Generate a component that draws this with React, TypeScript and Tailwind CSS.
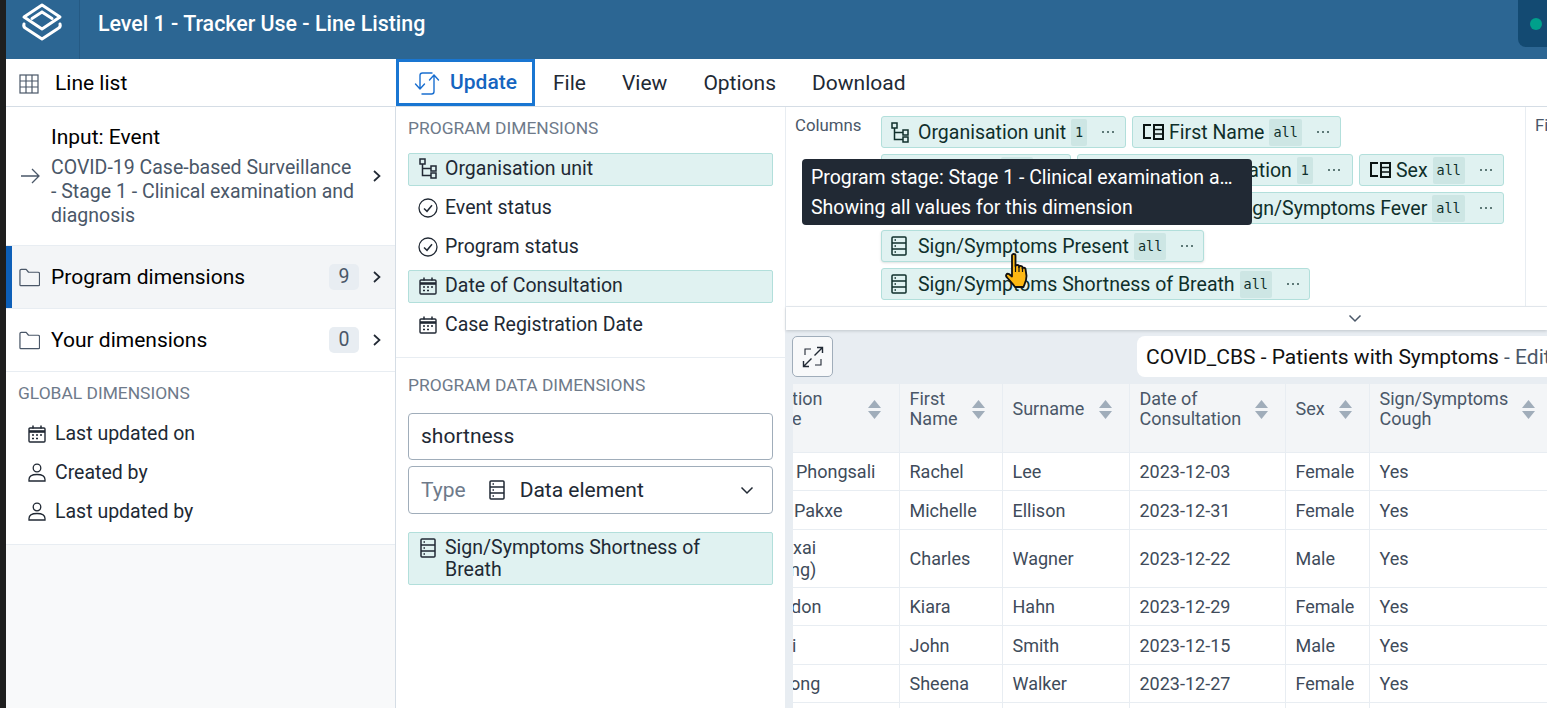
import React from "react";

const S = "[font-family:Roboto,sans-serif]";

function Logo() {
  return (
    <svg width="42" height="38" viewBox="0 0 42 38" fill="none" stroke="#fff" strokeWidth="3" strokeLinejoin="round" strokeLinecap="round">
      <path d="M21 2 L39 14 L21 26 L3 14 Z" />
      <path d="M21 9 L31 15.5 M21 9 L11 15.5" />
      <path d="M3 21 Q2 24 5 25.5 L21 36 L37 25.5 Q40 24 39 21" />
    </svg>
  );
}
function Grid() {
  return (
    <svg width="20" height="20" viewBox="0 0 20 20" fill="none" stroke="#4a5768" strokeWidth="1.2">
      <rect x="1" y="1" width="18" height="18" />
      <path d="M7 1v18M13 1v18M1 7h18M1 13h18" />
    </svg>
  );
}
function UpdateIcon() {
  return (
    <svg width="26" height="24" viewBox="0 0 26 24" fill="none" stroke="#1a6fd0" strokeWidth="1.4" strokeLinecap="round" strokeLinejoin="round">
      <path d="M1.500 13l4.500 5 4.500-5M6 18V4.500C6 3 7 2 8.500 2H18" />
      <path d="M15.500 9l4.500-5 4.500 5M20 4v16.500c0 1.500-1 2.500-2.500 2.500H8" />
    </svg>
  );
}
function Arrow() {
  return (
    <svg width="20" height="16" viewBox="0 0 20 16" fill="none" stroke="#4a5768" strokeWidth="1.300">
      <path d="M1 8h18M12 1l7 7-7 7" />
    </svg>
  );
}
function Chevron() {
  return (
    <svg width="10" height="14" viewBox="0 0 10 14" fill="none" stroke="#212934" strokeWidth="1.700" className="shrink-0">
      <path d="M2 2l5.500 5L2 12" />
    </svg>
  );
}
function ChevronDown({ color = "#212934" }: { color?: string }) {
  return (
    <svg width="14" height="9" viewBox="0 0 14 9" fill="none" stroke={color} strokeWidth="1.500">
      <path d="M1.500 1.500L7 7l5.500-5.500" />
    </svg>
  );
}
function Folder() {
  return (
    <svg width="21" height="19" viewBox="0 0 22 19" fill="none" stroke="#4a5768" strokeWidth="1.300" strokeLinejoin="round">
      <path d="M1 2.500C1 1.500 1.500 1 2.500 1h5l2.500 3h10c1 0 1.500 .5 1.500 1.500V17c0 .6-.5 1-1 1H2c-.6 0-1-.4-1-1z" />
    </svg>
  );
}
function Calendar() {
  return (
    <svg width="18" height="18" viewBox="0 0 18 18" fill="none" className="shrink-0">
      <rect x="1" y="3" width="16" height="14" rx="1" stroke="#212934" strokeWidth="1.400" />
      <path d="M1 6.500h16" stroke="#212934" strokeWidth="2.600" />
      <path d="M5 .5v3M13 .5v3" stroke="#212934" strokeWidth="1.500" />
      <path d="M4 10h2M8 10h2M12 10h2M4 13.500h2M8 13.500h2" stroke="#212934" strokeWidth="1.700" />
    </svg>
  );
}
function Person() {
  return (
    <svg width="18" height="19" viewBox="0 0 18 19" fill="none" stroke="#212934" strokeWidth="1.300" className="shrink-0">
      <circle cx="9" cy="5" r="3.800" />
      <path d="M1 18v-1.500C1 13.500 4 11.500 9 11.500s8 2 8 5V18z" />
    </svg>
  );
}
function Check() {
  return (
    <svg width="20" height="20" viewBox="0 0 20 20" fill="none" stroke="#212934" strokeWidth="1.300" className="shrink-0">
      <circle cx="10" cy="10" r="9" />
      <path d="M6 10.500l3 2.800 5-6" strokeWidth="1.500" />
    </svg>
  );
}
function OrgUnit({ color = "#212934" }: { color?: string }) {
  return (
    <svg width="18" height="21" viewBox="0 0 18 21" fill="none" stroke={color} strokeWidth="1.500" className="shrink-0">
      <rect x="1" y="1" width="5" height="5" />
      <rect x="12" y="8" width="5" height="5" />
      <rect x="12" y="15" width="5" height="5" />
      <path d="M3.500 6v11.500H12M3.500 10.500H12" />
    </svg>
  );
}
function DataEl({ color = "#212934" }: { color?: string }) {
  return (
    <svg width="16" height="20" viewBox="0 0 16 20" fill="none" stroke={color} strokeWidth="1.500" className="shrink-0">
      <rect x="1" y="1" width="14" height="18" rx="1" />
      <path d="M1 7h14M1 13h14" />
      <path d="M3.500 4h1.500M3.500 10h1.500M3.500 16h1.500" strokeWidth="1.300" />
    </svg>
  );
}
function Attr({ color = "#0a1413" }: { color?: string }) {
  return (
    <svg width="22" height="18" viewBox="0 0 22 18" fill="none" stroke={color} strokeWidth="2" className="shrink-0">
      <path d="M9 2H2v13h7" />
      <rect x="12" y="2" width="9" height="14" />
      <path d="M12 6.500h9M12 11h9" strokeWidth="1.700" />
    </svg>
  );
}
function Expand() {
  return (
    <svg width="22" height="22" viewBox="0 0 22 22" fill="none" stroke="#212934" strokeWidth="1.400">
      <path d="M9 3H3v6M19 13v6h-6" strokeWidth="1.100" />
      <path d="M12.500 9.500L20.500 1.500M15 1.500h5.500V7M9.500 12.500L1.500 20.500M1.500 15v5.500H7" />
    </svg>
  );
}
function Sort() {
  return (
    <svg width="13" height="19" viewBox="0 0 13 19" fill="#a0adba" className="shrink-0">
      <path d="M6.500 0L13 8H0zM6.500 19L0 11h13z" />
    </svg>
  );
}
function Dots() {
  return (
    <svg width="14" height="4" viewBox="0 0 14 4" fill="#33524f">
      <circle cx="2" cy="2" r="1" />
      <circle cx="7" cy="2" r="1" />
      <circle cx="12" cy="2" r="1" />
    </svg>
  );
}
function Hand() {
  return (
    <svg width="27" height="36" viewBox="0 0 27 36">
      <path
        d="M8 2.500c0-2 3.500-2 3.500 0V13c0-1.500 3.500-1.500 3.500 0v1c0-1.500 3.500-1.500 3.500 .5v1c0-1.500 3-1 3 .5l1 7c0 5-2 8-3 11H11C9 31 6 28 3 24.500c-2-2-.5-4.500 2-3.500l3 2.500z"
        fill="#fdb813"
        stroke="#111"
        strokeWidth="1.800"
        strokeLinejoin="round"
      />
      <path d="M11.500 13v6M15 14v5M18.500 15v4" stroke="#111" strokeWidth="1.200" />
    </svg>
  );
}

function Chip({ icon, label, tag, className = "" }: { icon: React.ReactNode; label: string; tag: string; className?: string }) {
  return (
    <div className={`flex h-8 items-center rounded-[3px] border border-[#b2dfdb] bg-[#e0f2f1] pl-[9px] text-[#0f2f2b] ${className}`}>
      <span className="flex w-[22px] shrink-0 justify-start">{icon}</span>
      <span className="ml-[5px] whitespace-nowrap pt-[2px] text-[19.500px] leading-5">{label}</span>
      <span className="ml-[5px] flex h-[27px] items-center justify-center rounded-[2px] bg-[#cde6e4] px-[4px] pt-[1px] [font-family:'DejaVu_Sans_Mono',monospace] text-[13.500px]">
        {tag}
      </span>
      <span className="flex flex-1 justify-center pl-[4px]"><Dots /></span>
    </div>
  );
}

function DimItem({ icon, label, active }: { icon: React.ReactNode; label: string; active?: boolean }) {
  return (
    <div className={`flex h-[33px] items-center gap-[7px] rounded-[2px] border pb-[2px] pl-[9px] text-[#212934] ${active ? "border-[#b2dfdb] bg-[#e0f2f1]" : "border-transparent"}`}>
      <span className="flex w-[20px] justify-center">{icon}</span>
      {label}
    </div>
  );
}

const cols = ["w-[106px]", "w-[103px]", "w-[127px]", "w-[156px]", "w-[84px]", "w-[178px]"];

function Th({ children, i }: { children: React.ReactNode; i: number }) {
  return (
    <th className={`${cols[i]} border-r border-b border-[#e8edf2] bg-[#f3f5f7] pl-[10px] ${i === 5 ? "pr-[12px]" : "pr-[17px]"} pt-[5px] pb-[22px] text-left align-top font-normal`}>
      <div className="flex min-h-[40px] items-center justify-between gap-1 leading-5 text-[#4a5768]">
        <span>{children}</span>
        <Sort />
      </div>
    </th>
  );
}
function Td({ children, cls = "" }: { children?: React.ReactNode; cls?: string }) {
  return <td className={`border-r border-b border-[#e8edf2] px-[10px] pt-[2px] leading-[22px] text-[#404b5a] ${cls}`}>{children}</td>;
}

const rows: [React.ReactNode, string, string, string, string, string, string][] = [
  [<span className="ml-[-7px]">Phongsali</span>, "Rachel", "Lee", "2023-12-03", "Female", "Yes", "h-[38px]"],
  [<span className="ml-[-9px]">Pakxe</span>, "Michelle", "Ellison", "2023-12-31", "Female", "Yes", "h-[39px]"],
  [<span className="ml-[-10px] block">xai<br /><span className="ml-[-3px]">ng)</span></span>, "Charles", "Wagner", "2023-12-22", "Male", "Yes", "h-[58px]"],
  [<span className="ml-[-12px]">don</span>, "Kiara", "Hahn", "2023-12-29", "Female", "Yes", "h-[38px]"],
  [<span className="ml-[-11px]">i</span>, "John", "Smith", "2023-12-15", "Male", "Yes", "h-[39px]"],
  [<span className="ml-[-13px]">ong</span>, "Sheena", "Walker", "2023-12-27", "Female", "Yes", "h-[38px]"],
  ["", "", "", "", "", "", "h-[38px]"],
];

export default function App() {
  return (
    <div className={`flex h-[708px] w-[1547px] overflow-hidden bg-white ${S} text-[19.500px] text-[#212934]`}>
      <div className="w-[6px] shrink-0 bg-[#1e1e1e]" />
      <div className="flex min-w-0 flex-1 flex-col">
        {/* top bar */}
        <header className="flex h-[59px] shrink-0 items-start bg-[#2c6693] text-white">
          <div className="flex h-full w-[74px] shrink-0 items-start justify-center border-r border-[#255a84] pt-[3px] pr-[1px]">
            <Logo />
          </div>
          <div className="ml-[18px] mt-[12px] text-[21.400px] leading-6 font-medium">Level 1 - Tracker Use - Line Listing</div>
          <div className="ml-auto flex h-[47px] w-[29px] items-center rounded-bl-lg bg-[#134a72] pl-[12px]">
            <span className="h-3 w-3 rounded-full bg-[#00a08b]" />
          </div>
        </header>

        {/* toolbar */}
        <div className="flex h-[48px] shrink-0 border-b border-[#d5dde5] text-[21px]">
          <div className="flex w-[390px] shrink-0 items-center gap-[16px] pl-[13px] pt-[2px] text-black">
            <Grid />
            <span>Line list</span>
          </div>
          <div className="flex w-[139px] shrink-0 items-center gap-[10px] border-[3px] border-[#1976d2] pl-[15px] font-medium text-[#1565c0]">
            <UpdateIcon />
            Update
          </div>
          <nav className="ml-[18px] flex items-center gap-[36px] pt-[2px] text-[#212934]">
            <span>File</span>
            <span>View</span>
            <span>Options</span>
            <span>Download</span>
          </nav>
        </div>

        <div className="flex min-h-0 flex-1">
          {/* left */}
          <aside className="flex w-[390px] shrink-0 flex-col border-r border-[#d5dde5] bg-[#f8f9fa]">
            <div className="flex h-[139px] items-center border-b border-[#e8edf2] bg-white pl-[14px]">
              <Arrow />
              <div className="ml-[11px] w-[308px] shrink-0 pt-[1px]">
                <div className="mb-[7px] text-[21px] leading-6 text-[#000]">Input: Event</div>
                <div className="leading-6 text-[#4a5768]">COVID-19 Case-based Surveillance - Stage 1 - Clinical examination and diagnosis</div>
              </div>
              <span className="ml-[13px]"><Chevron /></span>
            </div>
            <div className="flex h-[63px] items-center border-b border-[#e8edf2] bg-[#f3f5f7] text-[21px]">
              <span className="h-full w-[6px] bg-[#0d5fb8]" />
              <span className="ml-[7px]"><Folder /></span>
              <span className="ml-[11px] flex-1 pt-[2px] text-[#000]">Program dimensions</span>
              <span className="flex h-[26px] w-[30px] items-center justify-center rounded-[5px] bg-[#e8edf2] text-[19.500px] text-[#4a5768]">9</span>
              <span className="ml-[13px] mr-[13px]"><Chevron /></span>
            </div>
            <div className="flex h-[63px] items-center border-b border-[#e8edf2] bg-white text-[21px]">
              <span className="ml-[13px]"><Folder /></span>
              <span className="ml-[11px] flex-1 pt-[2px] text-[#000]">Your dimensions</span>
              <span className="flex h-[26px] w-[30px] items-center justify-center rounded-[5px] bg-[#e8edf2] text-[19.500px] text-[#4a5768]">0</span>
              <span className="ml-[13px] mr-[13px]"><Chevron /></span>
            </div>
            <div className="flex h-[173px] flex-col border-b border-[#e8edf2] bg-white pl-[12px] pt-[11px]">
              <div className="text-[17.400px] leading-[20px] text-[#6e7a8a]">GLOBAL DIMENSIONS</div>
              <div className="mt-[14px] flex flex-col gap-[6px]">
                {[
                  [<Calendar />, "Last updated on"],
                  [<Person />, "Created by"],
                  [<Person />, "Last updated by"],
                ].map(([ic, t], i) => (
                  <div key={i} className="flex h-[33px] items-center gap-[9px] pl-[10px]">
                    {ic}
                    <span>{t}</span>
                  </div>
                ))}
              </div>
            </div>
          </aside>

          {/* middle */}
          <section className="flex w-[390px] shrink-0 flex-col border-r border-[#e8edf2]">
            <div className="border-b border-[#e8edf2] px-[12px] pt-[11px] pb-[15px]">
              <div className="mb-[15px] text-[17.400px] leading-5 text-[#6e7a8a]">PROGRAM DIMENSIONS</div>
              <div className="flex flex-col gap-[6px]">
                <DimItem icon={<OrgUnit />} label="Organisation unit" active />
                <DimItem icon={<Check />} label="Event status" />
                <DimItem icon={<Check />} label="Program status" />
                <DimItem icon={<Calendar />} label="Date of Consultation" active />
                <DimItem icon={<Calendar />} label="Case Registration Date" />
              </div>
            </div>
            <div className="px-[12px] pt-[17px]">
              <div className="mb-[18px] text-[17.400px] leading-5 text-[#6e7a8a]">PROGRAM DATA DIMENSIONS</div>
              <div className="flex h-[47px] items-center rounded-[4px] border border-[#a0adba] pl-[12px] text-[21px]">shortness</div>
              <div className="mt-[6px] flex h-[48px] items-center rounded-[4px] border border-[#a0adba] pl-[12px] pr-[18px] text-[21px]">
                <span className="pt-[2px] text-[#6e7a8a]">Type</span>
                <span className="ml-[23px]"><DataEl /></span>
                <span className="ml-[15px] flex-1 pt-[2px]">Data element</span>
                <ChevronDown />
              </div>
              <div className="mt-[18px] flex h-[53px] items-start gap-[9px] rounded-[2px] border border-[#b2dfdb] bg-[#e0f2f1] pl-[11px] pt-[4px] leading-[22px]">
                <span className="mt-[1px]"><DataEl /></span>
                <span className="w-[290px]">Sign/Symptoms Shortness of Breath</span>
              </div>
            </div>
          </section>

          {/* right */}
          <main className="flex min-w-0 flex-1 flex-col">
            <div className="relative flex h-[200px] shrink-0 border-b border-[#e8edf2]">
              <div className="flex w-[740px] shrink-0 border-r border-[#e8edf2] pt-[9px] pl-[9px]">
                <div className="w-[86px] shrink-0 text-[16.800px] leading-[18px] text-[#4a5768]">Columns</div>
                <div className="flex flex-col gap-[6px]">
                  <div className="flex gap-[6px]">
                    <Chip icon={<OrgUnit color="#0f2f2b" />} label="Organisation unit" tag="1" className="w-[245px]" />
                    <Chip icon={<Attr />} label="First Name" tag="all" className="w-[209px]" />
                  </div>
                  <div className="flex gap-[6px]">
                    <Chip icon={<Attr />} label="Surname" tag="all" className="w-[190px]" />
                    <Chip icon={<Calendar />} label="Date of Consultation" tag="1" className="w-[276px]" />
                    <Chip icon={<Attr />} label="Sex" tag="all" className="w-[145px]" />
                  </div>
                  <div className="flex gap-[6px]">
                    <Chip icon={<DataEl color="#0f2f2b" />} label="Sign/Symptoms Cough" tag="all" className="w-[312px]" />
                    <Chip icon={<DataEl color="#0f2f2b" />} label="Sign/Symptoms Fever" tag="all" className="w-[305px]" />
                  </div>
                  <Chip icon={<DataEl color="#0f2f2b" />} label="Sign/Symptoms Present" tag="all" className="w-[323px] border-[#8cc9c4] bg-[#cde8e6] shadow-sm" />
                  <Chip icon={<DataEl color="#0f2f2b" />} label="Sign/Symptoms Shortness of Breath" tag="all" className="w-[429px]" />
                </div>
              </div>
              <div className="overflow-hidden pt-[9px] pl-[9px] text-[16.800px] leading-[18px] text-[#4a5768]">Filter</div>

              <div className="absolute left-[16px] top-[52px] h-[66px] w-[450px] rounded-[4px] bg-[#212934] px-[9px] pt-[9px] text-white">
                <div className="h-[30px] leading-[20px] whitespace-nowrap">Program stage: Stage 1 - Clinical examination a…</div>
                <div className="h-[26px] leading-[20px] whitespace-nowrap">Showing all values for this dimension</div>
              </div>
              <div className="absolute left-[218px] top-[146px]"><Hand /></div>
            </div>

            <div className="z-10 flex h-[23px] shrink-0 items-center justify-center bg-white pl-[376px] shadow-[0_1px_3px_rgba(33,41,52,0.2)]">
              <ChevronDown color="#4a5768" />
            </div>

            <div className="min-h-0 flex-1 bg-[#e8edf2] pl-[7px]">
              <div className="flex h-[54px] items-start justify-between pt-[6px]">
                <button className="ml-[-1px] flex h-[41px] w-[41px] items-center justify-center rounded-[5px] border border-[#a0adba] bg-[#f8f9fa]">
                  <Expand />
                </button>
                <div className="h-[41px] w-[410px] overflow-hidden rounded-l-lg bg-white pl-[9px] pt-[1px] text-[21px] leading-[41px] whitespace-nowrap text-[#111]">
                  COVID_CBS - Patients with Symptoms <span className="text-[#4a5768]">- Edit</span>
                </div>
              </div>
              <div className="overflow-hidden bg-white">
                <table className="w-[754px] table-fixed border-collapse text-[18px]">
                  <thead>
                    <tr className="h-[68px]">
                      <th className={`${cols[0]} overflow-hidden border-r border-b border-[#e8edf2] bg-[#f3f5f7] pt-[5px] pb-[22px] pr-[18px] text-left align-top font-normal`}>
                        <div className="flex min-h-[40px] items-center justify-between leading-5 text-[#4a5768]">
                          <span className="ml-[-1px] block">tion<br />e</span>
                          <Sort />
                        </div>
                      </th>
                      <Th i={1}>First<br />Name</Th>
                      <Th i={2}>Surname</Th>
                      <Th i={3}>Date of<br />Consultation</Th>
                      <Th i={4}>Sex</Th>
                      <Th i={5}>Sign/Symptoms<br />Cough</Th>
                    </tr>
                  </thead>
                  <tbody>
                    {rows.map((r, i) => (
                      <tr key={i} className={r[6]}>
                        <Td cls="overflow-hidden">{r[0]}</Td>
                        <Td>{r[1]}</Td>
                        <Td>{r[2]}</Td>
                        <Td>{r[3]}</Td>
                        <Td>{r[4]}</Td>
                        <Td>{r[5]}</Td>
                      </tr>
                    ))}
                  </tbody>
                </table>
              </div>
            </div>
          </main>
        </div>
      </div>
    </div>
  );
}
